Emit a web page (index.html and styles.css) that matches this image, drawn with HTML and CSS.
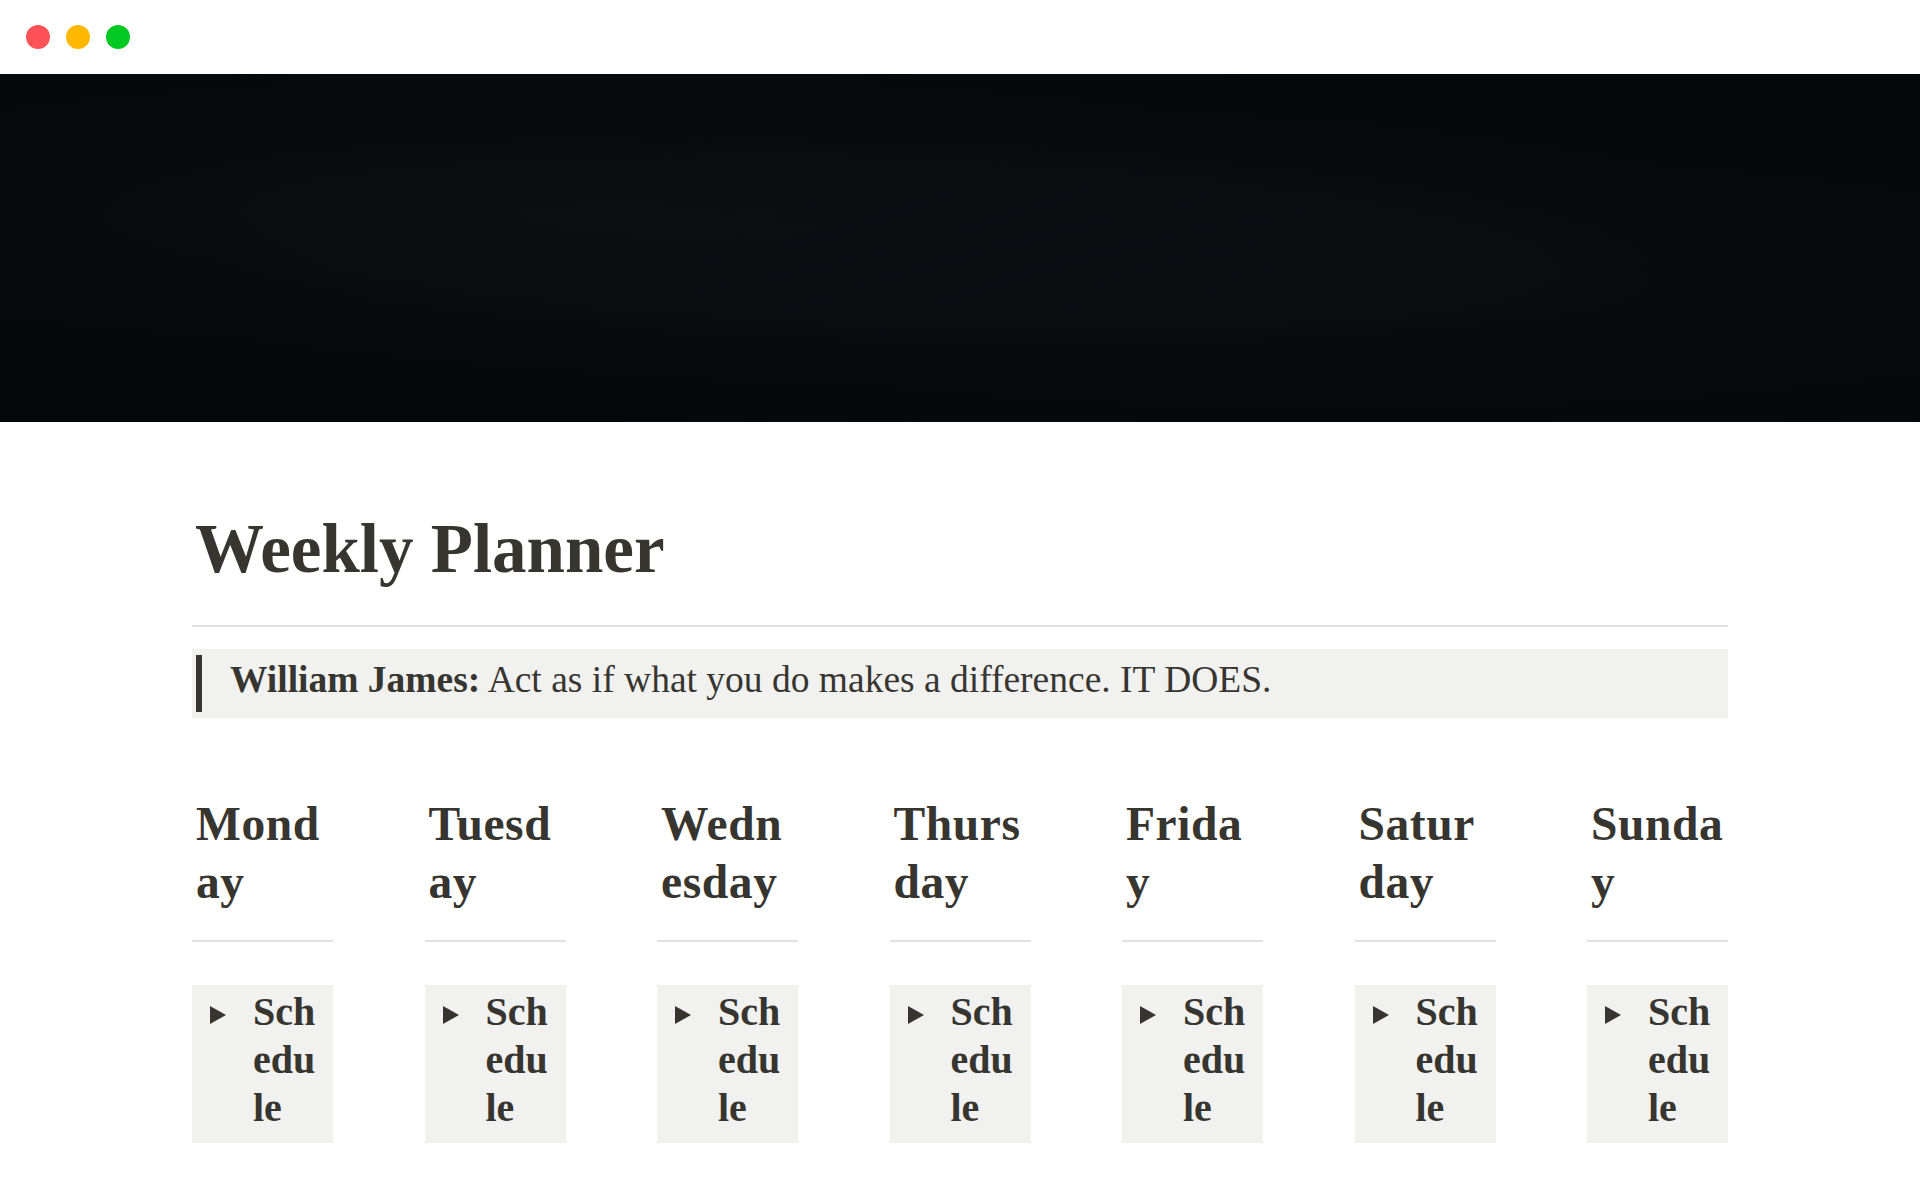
FILE: index.html
```html
<!DOCTYPE html>
<html lang="en">
<head>
<meta charset="utf-8">
<title>Weekly Planner</title>
<link rel="stylesheet" href="styles.css">
</head>
<body>
<div class="titlebar">
  <span class="light red"></span>
  <span class="light yellow"></span>
  <span class="light green"></span>
</div>
<div class="cover"></div>
<main class="page">
  <h1 class="title">Weekly Planner</h1>
  <hr class="divider">
  <div class="quote-wrap">
    <blockquote class="quote"><strong>William James:</strong> Act as if what you do makes a difference. IT DOES.</blockquote>
  </div>
  <div class="days">
    <section class="day">
      <h2 class="day-name">Mond<br>ay</h2>
      <hr class="divider small">
      <div class="toggle"><svg class="caret" viewBox="0 0 16 18" width="16" height="18"><polygon points="0,0 16,9 0,18"/></svg><span class="toggle-text">Sch<br>edu<br>le</span></div>
    </section>
    <section class="day">
      <h2 class="day-name">Tuesd<br>ay</h2>
      <hr class="divider small">
      <div class="toggle"><svg class="caret" viewBox="0 0 16 18" width="16" height="18"><polygon points="0,0 16,9 0,18"/></svg><span class="toggle-text">Sch<br>edu<br>le</span></div>
    </section>
    <section class="day">
      <h2 class="day-name">Wedn<br>esday</h2>
      <hr class="divider small">
      <div class="toggle"><svg class="caret" viewBox="0 0 16 18" width="16" height="18"><polygon points="0,0 16,9 0,18"/></svg><span class="toggle-text">Sch<br>edu<br>le</span></div>
    </section>
    <section class="day">
      <h2 class="day-name">Thurs<br>day</h2>
      <hr class="divider small">
      <div class="toggle"><svg class="caret" viewBox="0 0 16 18" width="16" height="18"><polygon points="0,0 16,9 0,18"/></svg><span class="toggle-text">Sch<br>edu<br>le</span></div>
    </section>
    <section class="day">
      <h2 class="day-name">Frida<br>y</h2>
      <hr class="divider small">
      <div class="toggle"><svg class="caret" viewBox="0 0 16 18" width="16" height="18"><polygon points="0,0 16,9 0,18"/></svg><span class="toggle-text">Sch<br>edu<br>le</span></div>
    </section>
    <section class="day">
      <h2 class="day-name">Satur<br>day</h2>
      <hr class="divider small">
      <div class="toggle"><svg class="caret" viewBox="0 0 16 18" width="16" height="18"><polygon points="0,0 16,9 0,18"/></svg><span class="toggle-text">Sch<br>edu<br>le</span></div>
    </section>
    <section class="day">
      <h2 class="day-name">Sunda<br>y</h2>
      <hr class="divider small">
      <div class="toggle"><svg class="caret" viewBox="0 0 16 18" width="16" height="18"><polygon points="0,0 16,9 0,18"/></svg><span class="toggle-text">Sch<br>edu<br>le</span></div>
    </section>
  </div>
</main>
</body>
</html>
```
FILE: styles.css
```css
html, body {
  margin: 0;
  padding: 0;
  background: #ffffff;
}
body {
  width: 1920px;
  height: 1200px;
  overflow: hidden;
  font-family: "Liberation Serif", "Times New Roman", serif;
  color: #37352f;
}
.titlebar {
  height: 74px;
  display: flex;
  align-items: center;
  gap: 16px;
  padding-left: 26px;
  box-sizing: border-box;
}
.light {
  width: 24px;
  height: 24px;
  border-radius: 50%;
  display: block;
}
.light.red { background: #fe5257; }
.light.yellow { background: #ffb700; }
.light.green { background: #00c924; }
.cover {
  height: 348px;
  background:
    radial-gradient(ellipse at 30% 40%, rgba(30, 32, 38, 0.25), transparent 60%),
    radial-gradient(ellipse at 70% 60%, rgba(25, 27, 32, 0.25), transparent 60%),
    #06070a;
}
.page {
  padding: 0 192px;
}
.title {
  margin: 87px 0 0;
  padding-left: 3px;
  font-size: 69px;
  line-height: 80px;
  font-weight: 700;
  letter-spacing: 0;
}
.divider {
  border: 0;
  height: 2px;
  background: #e1e1e0;
  margin: 36px 0 0;
}
.quote-wrap {
  margin-top: 22px;
  background: #f1f1ef;
  padding: 6px 0 6px 4px;
}
.quote {
  margin: 0;
  border-left: 6px solid #37352f;
  padding: 0 0 7px 28px;
  font-size: 37.5px;
  line-height: 50px;
}
.quote strong {
  font-weight: 700;
}
.days {
  margin-top: 77px;
  display: grid;
  grid-template-columns: repeat(7, 1fr);
  column-gap: 91.5px;
}
.day-name {
  margin: 0;
  padding-left: 4px;
  font-size: 47.5px;
  line-height: 58px;
  font-weight: 700;
  letter-spacing: 0.6px;
}
.divider.small {
  margin-top: 29px;
}
.toggle {
  margin-top: 43px;
  background: #f1f1ef;
  display: flex;
  align-items: flex-start;
  padding: 2.5px 0 11px 18px;
}
.caret {
  flex: none;
  margin-top: 18.5px;
  fill: #37352f;
}
.toggle-text {
  margin-left: 27px;
  font-size: 40px;
  line-height: 48px;
  font-weight: 700;
}
```
